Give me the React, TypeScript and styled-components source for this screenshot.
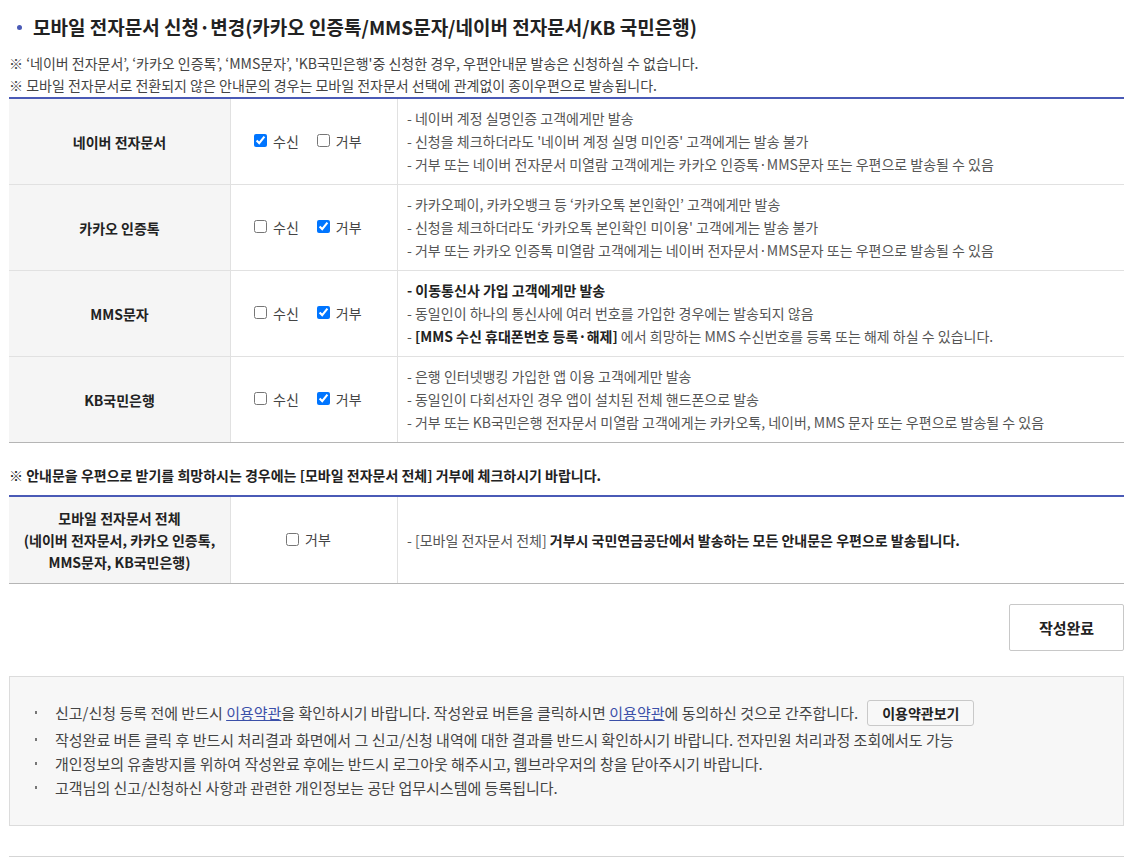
import React from 'react';
import styled, { createGlobalStyle } from 'styled-components';

const GlobalStyle = createGlobalStyle`
  body {
    margin: 0;
    background: #fff;
    font-family: 'Noto Sans CJK KR', 'Noto Sans', sans-serif;
    color: #333;
  }
`;

const Page = styled.div`
  width: 1115px;
  margin-left: 9px;
  padding-top: 12px;
`;

const Title = styled.h2`
  position: relative;
  margin: 0;
  padding-left: 24px;
  font-size: 19px;
  font-weight: 700;
  line-height: 30px;
  color: #222;

  &::before {
    content: '';
    position: absolute;
    left: 8px;
    top: 13px;
    width: 5px;
    height: 5px;
    border-radius: 50%;
    background: #4a5ab6;
  }
`;

const Notes = styled.div`
  margin-top: 10px;
  margin-bottom: 1px;
  font-size: 14px;
  line-height: 22px;
  color: #444;
`;

const NoteLine = styled.p<{ $bold?: boolean }>`
  margin: 0;
  font-weight: ${(p) => (p.$bold ? 700 : 400)};
  color: ${(p) => (p.$bold ? '#222' : '#444')};
`;

const Table = styled.div`
  border-top: 2px solid #4a5ab6;
  border-bottom: 1px solid #b5b5b5;
`;

const Row = styled.div<{ $last?: boolean }>`
  display: grid;
  grid-template-columns: 222px 167px 1fr;
  border-bottom: ${(p) => (p.$last ? 'none' : '1px solid #e1e1e1')};
`;

const LabelCell = styled.div`
  display: flex;
  align-items: center;
  justify-content: center;
  text-align: center;
  padding: 10px 0;
  background: #f5f5f5;
  border-right: 1px solid #e1e1e1;
  font-size: 14px;
  font-weight: 700;
  line-height: 22px;
  color: #222;
`;

const ChoiceCell = styled.div<{ $indent?: number }>`
  display: flex;
  align-items: center;
  padding-left: ${(p) => p.$indent ?? 23}px;
  gap: 18px;
  border-right: 1px solid #e1e1e1;
  padding-bottom: 2px;
`;

const Choice = styled.label`
  display: inline-flex;
  align-items: center;
  font-size: 14px;
  color: #444;

  input {
    margin: 0 6px 0 0;
    width: 13px;
    height: 13px;
  }
`;

const DescCell = styled.ul`
  list-style: none;
  margin: 0;
  padding: 8px 10px 8px 9px;
  font-size: 14px;
  line-height: 23px;
  color: #555;
  align-self: center;
`;

const DescItem = styled.li`
  margin: 0;
`;

const Strong = styled.b`
  font-weight: 700;
  color: #222;
`;

const Section2Note = styled.div`
  margin-top: 21px;
  margin-bottom: 9px;
`;

const ButtonRow = styled.div`
  display: flex;
  justify-content: flex-end;
  margin-top: 20px;
`;

const SubmitButton = styled.button`
  width: 115px;
  height: 47px;
  border: 1px solid #c8c8c8;
  border-radius: 2px;
  background: #fff;
  font-family: inherit;
  font-size: 15px;
  font-weight: 700;
  color: #222;
`;

const InfoBox = styled.ul`
  margin: 25px 0 0;
  padding: 22px 0 25px 0;
  list-style: none;
  background: #f7f7f7;
  border: 1px solid #dcdcdc;
  font-size: 15px;
  color: #444;
`;

const InfoItem = styled.li`
  position: relative;
  padding-left: 45px;
  line-height: 24px;
  display: flex;
  align-items: center;

  &::before {
    content: '';
    position: absolute;
    left: 25px;
    top: 10px;
    width: 2px;
    height: 3px;
    background: #777;
  }
`;

const FirstInfoItem = styled(InfoItem)`
  line-height: 27px;
  margin-bottom: 2px;
  &::before {
    top: 12px;
  }
`;

const TermLink = styled.a`
  color: #3b4fa8;
  text-decoration: underline;
`;

const SmallButton = styled.button`
  margin-left: 9px;
  height: 26px;
  padding: 0 14px;
  border: 1px solid #c9c9c9;
  border-radius: 3px;
  background: #f8f8f8;
  font-family: inherit;
  font-size: 14px;
  font-weight: 700;
  color: #222;
`;

const Footer = styled.div`
  margin-top: 30px;
  border-top: 1px solid #d5d5d5;
`;

interface Channel {
  name: string;
  receive: boolean;
  lines: React.ReactNode[];
}

const channels: Channel[] = [
  {
    name: '네이버 전자문서',
    receive: true,
    lines: [
      '- 네이버 계정 실명인증 고객에게만 발송',
      "- 신청을 체크하더라도 '네이버 계정 실명 미인증' 고객에게는 발송 불가",
      '- 거부 또는 네이버 전자문서 미열람 고객에게는 카카오 인증톡·MMS문자 또는 우편으로 발송될 수 있음',
    ],
  },
  {
    name: '카카오 인증톡',
    receive: false,
    lines: [
      '- 카카오페이, 카카오뱅크 등 ‘카카오톡 본인확인’ 고객에게만 발송',
      "- 신청을 체크하더라도 ‘카카오톡 본인확인 미이용' 고객에게는 발송 불가",
      '- 거부 또는 카카오 인증톡 미열람 고객에게는 네이버 전자문서·MMS문자 또는 우편으로 발송될 수 있음',
    ],
  },
  {
    name: 'MMS문자',
    receive: false,
    lines: [
      <Strong key="a">- 이동통신사 가입 고객에게만 발송</Strong>,
      '- 동일인이 하나의 통신사에 여러 번호를 가입한 경우에는 발송되지 않음',
      <>
        - <Strong>[MMS 수신 휴대폰번호 등록·해제]</Strong> 에서 희망하는 MMS 수신번호를 등록 또는 해제 하실 수 있습니다.
      </>,
    ],
  },
  {
    name: 'KB국민은행',
    receive: false,
    lines: [
      '- 은행 인터넷뱅킹 가입한 앱 이용 고객에게만 발송',
      '- 동일인이 다회선자인 경우 앱이 설치된 전체 핸드폰으로 발송',
      '- 거부 또는 KB국민은행 전자문서 미열람 고객에게는 카카오톡, 네이버, MMS 문자 또는 우편으로 발송될 수 있음',
    ],
  },
];

const App: React.FC = () => {
  return (
    <>
      <GlobalStyle />
      <Page>
        <Title>모바일 전자문서 신청·변경(카카오 인증톡/MMS문자/네이버 전자문서/KB 국민은행)</Title>
        <Notes>
          <NoteLine>※ ‘네이버 전자문서’, ‘카카오 인증톡’, ‘MMS문자’, 'KB국민은행'중 신청한 경우, 우편안내문 발송은 신청하실 수 없습니다.</NoteLine>
          <NoteLine>※ 모바일 전자문서로 전환되지 않은 안내문의 경우는 모바일 전자문서 선택에 관계없이 종이우편으로 발송됩니다.</NoteLine>
        </Notes>

        <Table>
          {channels.map((ch, i) => (
            <Row key={ch.name} $last={i === channels.length - 1}>
              <LabelCell>{ch.name}</LabelCell>
              <ChoiceCell>
                <Choice>
                  <input type="checkbox" defaultChecked={ch.receive} />
                  수신
                </Choice>
                <Choice>
                  <input type="checkbox" defaultChecked={!ch.receive} />
                  거부
                </Choice>
              </ChoiceCell>
              <DescCell>
                {ch.lines.map((line, j) => (
                  <DescItem key={j}>{line}</DescItem>
                ))}
              </DescCell>
            </Row>
          ))}
        </Table>

        <Section2Note>
          <Notes>
            <NoteLine $bold>※ 안내문을 우편으로 받기를 희망하시는 경우에는 [모바일 전자문서 전체] 거부에 체크하시기 바랍니다.</NoteLine>
          </Notes>
        </Section2Note>

        <Table>
          <Row $last>
            <LabelCell>
              모바일 전자문서 전체
              <br />
              (네이버 전자문서, 카카오 인증톡,
              <br />
              MMS문자, KB국민은행)
            </LabelCell>
            <ChoiceCell $indent={55}>
              <Choice>
                <input type="checkbox" />
                거부
              </Choice>
            </ChoiceCell>
            <DescCell>
              <DescItem>
                - [모바일 전자문서 전체] <Strong>거부시 국민연금공단에서 발송하는 모든 안내문은 우편으로 발송됩니다.</Strong>
              </DescItem>
            </DescCell>
          </Row>
        </Table>

        <ButtonRow>
          <SubmitButton type="button">작성완료</SubmitButton>
        </ButtonRow>

        <InfoBox>
          <FirstInfoItem>
            <span>
              신고/신청 등록 전에 반드시 <TermLink href="#">이용약관</TermLink>을 확인하시기 바랍니다. 작성완료 버튼을 클릭하시면{' '}
              <TermLink href="#">이용약관</TermLink>에 동의하신 것으로 간주합니다.
            </span>
            <SmallButton type="button">이용약관보기</SmallButton>
          </FirstInfoItem>
          <InfoItem>작성완료 버튼 클릭 후 반드시 처리결과 화면에서 그 신고/신청 내역에 대한 결과를 반드시 확인하시기 바랍니다. 전자민원 처리과정 조회에서도 가능</InfoItem>
          <InfoItem>개인정보의 유출방지를 위하여 작성완료 후에는 반드시 로그아웃 해주시고, 웹브라우저의 창을 닫아주시기 바랍니다.</InfoItem>
          <InfoItem>고객님의 신고/신청하신 사항과 관련한 개인정보는 공단 업무시스템에 등록됩니다.</InfoItem>
        </InfoBox>

        <Footer />
      </Page>
    </>
  );
};

export default App;
